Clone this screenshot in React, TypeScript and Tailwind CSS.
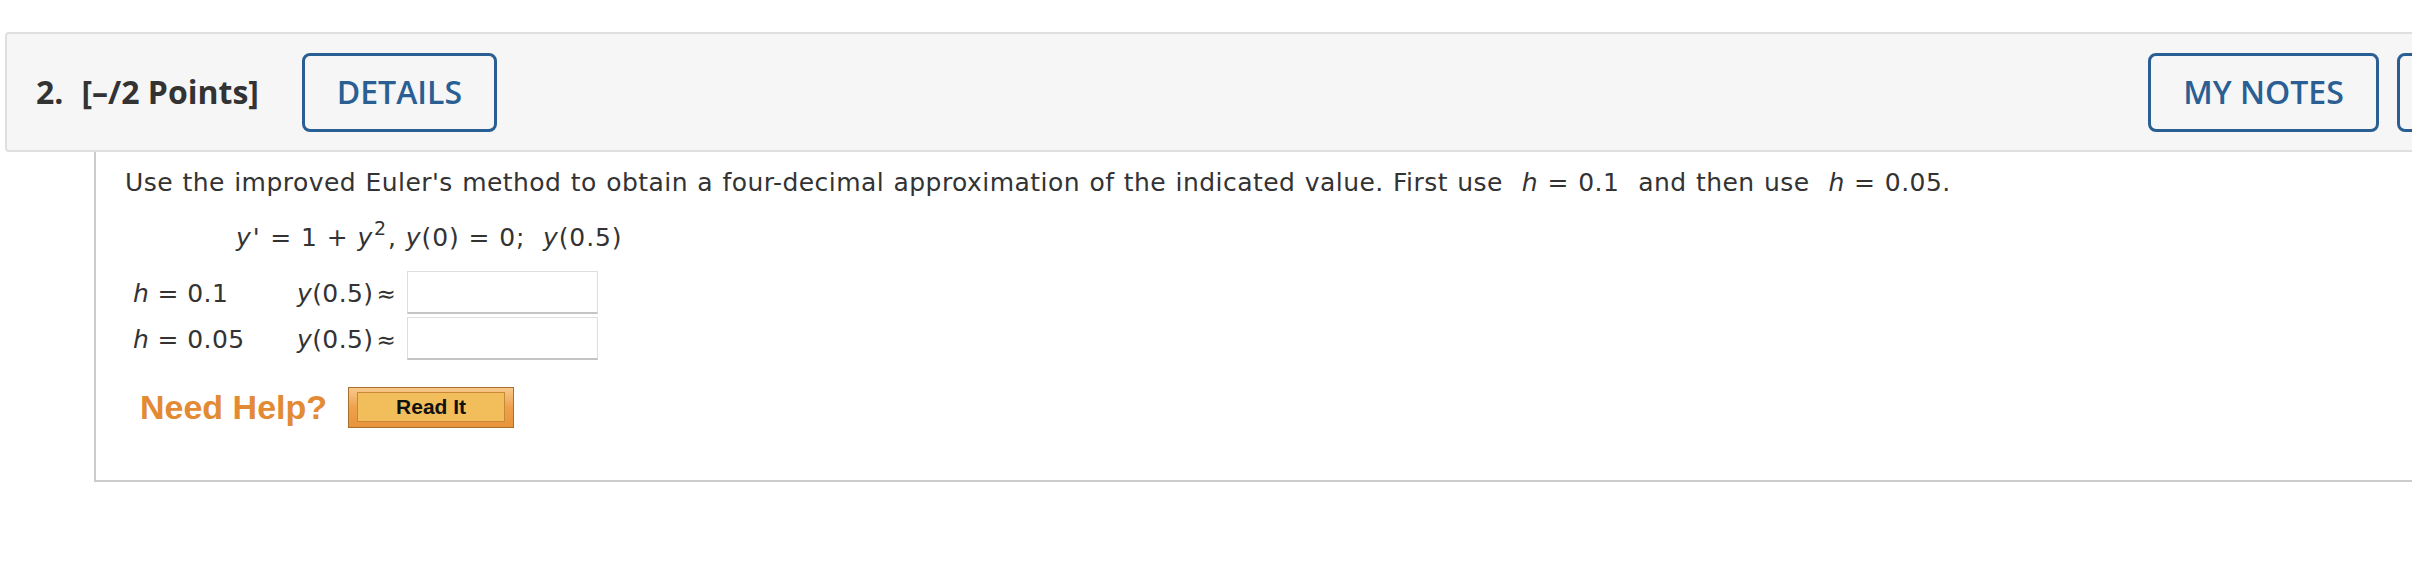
import React from "react";

const blueBtn =
  "h-[79px] border-[3px] border-[#2a5f94] rounded-[8px] flex items-center text-[#2a5f94] text-[32px] font-semibold bg-[#f6f6f6]";

function Answer() {
  return (
    <div className="w-[191px] h-[43px] bg-white border border-[#dedede] border-b-2 border-b-[#c4c4c4]" />
  );
}

function Row({ h }: { h: string }) {
  return (
    <div className="flex items-start">
      <div className="w-[164px] h-[43px] pt-[3px] leading-[40px] whitespace-pre tracking-[0.4px]">
        <i>h</i> = {h}
      </div>
      <div className="w-[110px] h-[43px] pt-[3px] leading-[40px] whitespace-pre tracking-[0.4px]">
        <i>y</i>(0.5)<span className="text-[23px] ml-[3px]">≈</span>
      </div>
      <Answer />
    </div>
  );
}

export default function App() {
  return (
    <div className="w-[2412px] h-[568px] bg-white overflow-hidden">
      <div className="pt-[32px] pl-[5px]">
        <div
          className="w-[2660px] h-[120px] bg-[#f6f6f6] border-2 border-[#dfdfdf] rounded-[4px] flex items-center pl-[29px] pr-[35px] text-[#333333]"
          style={{ fontFamily: '"Open Sans", sans-serif' }}
        >
          <span className="text-[32px] font-bold">2.</span>
          <span className="text-[32px] font-bold ml-[18px]">[–/2 Points]</span>
          <div className={`${blueBtn} justify-center w-[195px] ml-[43px]`}>DETAILS</div>
          <div className={`${blueBtn} justify-center w-[231px] ml-auto`}>MY NOTES</div>
          <div className={`${blueBtn} w-[231px] ml-[18px]`} aria-label="Ask your teacher" />
        </div>
        <div
          className="ml-[89px] w-[2400px] h-[330px] border-l-2 border-b-2 border-[#cccccc] pl-[29px] pt-[14px] text-[#333333] text-[25px]"
          style={{ fontFamily: '"DejaVu Sans", Verdana, sans-serif' }}
        >
          <p className="leading-[34px] whitespace-pre tracking-[0.45px] [word-spacing:1px]">
            Use the improved Euler's method to obtain a four-decimal approximation of the indicated value. First use{"  "}
            <i>h</i> = 0.1{"  "}and then use{"  "}<i>h</i> = 0.05.
          </p>
          <div className="leading-[34px] mt-[21px] pl-[111px] whitespace-pre tracking-[0.9px]">
            <i>y</i>
            <i className="ml-[1px] mr-[1px]">'</i> = 1 + <i>y</i>
            <sup className="text-[19px] -top-[0.6em] ml-[1px] mr-[1px]">2</sup>, <i>y</i>(0) = 0;{"  "}<i>y</i>(0.5)
          </div>
          <div className="mt-[16px] pl-[8px] flex flex-col gap-[3px]">
            <Row h="0.1" />
            <Row h="0.05" />
          </div>
          <div className="mt-[27px] pl-[15px] flex items-center h-[41px]">
            <span
              className="text-[34px] font-bold text-[#e38a35] leading-[41px]"
              style={{ fontFamily: '"Liberation Sans", Arial, sans-serif' }}
            >
              Need Help?
            </span>
            <div className="ml-[21px] w-[166px] h-[41px] border border-[#a8702f] bg-gradient-to-b from-[#f7c88c] via-[#eea14a] to-[#e8943c] px-[8px] pt-[4px] pb-[5px]">
              <div
                className="w-full h-full bg-[#f2be5c] border border-[#c7883a] flex items-center justify-center text-[21px] font-bold text-[#111111]"
                style={{ fontFamily: '"Liberation Sans", Arial, sans-serif' }}
              >
                Read It
              </div>
            </div>
          </div>
        </div>
      </div>
    </div>
  );
}
